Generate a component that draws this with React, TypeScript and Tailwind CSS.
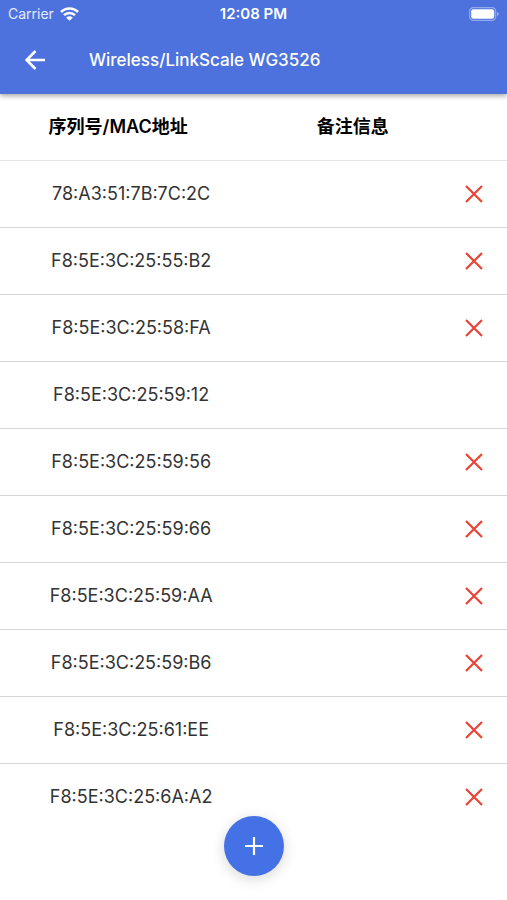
import { useState } from "react"

// ── Data ───────────────────────────────────────────────────────────────────────

type Device = {
  mac: string
  note: string
  removable: boolean
}

const DEVICES: Device[] = [
  { mac: "78:A3:51:7B:7C:2C", note: "", removable: true },
  { mac: "F8:5E:3C:25:55:B2", note: "", removable: true },
  { mac: "F8:5E:3C:25:58:FA", note: "", removable: true },
  { mac: "F8:5E:3C:25:59:12", note: "", removable: false },
  { mac: "F8:5E:3C:25:59:56", note: "", removable: true },
  { mac: "F8:5E:3C:25:59:66", note: "", removable: true },
  { mac: "F8:5E:3C:25:59:AA", note: "", removable: true },
  { mac: "F8:5E:3C:25:59:B6", note: "", removable: true },
  { mac: "F8:5E:3C:25:61:EE", note: "", removable: true },
  { mac: "F8:5E:3C:25:6A:A2", note: "", removable: true },
]

// ── Icons ──────────────────────────────────────────────────────────────────────

function WifiIcon() {
  return (
    <svg width="19" height="14" viewBox="0 0 19 14" fill="none" stroke="currentColor" strokeWidth="2.6" aria-hidden="true">
      <path d="M1 5a12 12 0 0 1 17 0" />
      <path d="M4 8.200a7.800 7.800 0 0 1 11 0" />
      <path d="M9.500 13.800 6.200 10.700a4.600 4.600 0 0 1 6.600 0z" fill="currentColor" stroke="none" />
    </svg>
  )
}

function BatteryIcon() {
  return (
    <svg width="30" height="14" viewBox="0 0 30 14" aria-hidden="true">
      <rect x="0.7" y="0.7" width="26" height="12.6" rx="3.6" fill="none" stroke="#fff" strokeOpacity="0.4" strokeWidth="1.2" />
      <rect x="2.2" y="2.2" width="23" height="9.6" rx="2.2" fill="#fff" />
      <path d="M28.2 5v4c.9-.4 1.5-1.1 1.5-2s-.6-1.600-1.500-2z" fill="#fff" fillOpacity="0.5" />
    </svg>
  )
}

function BackIcon() {
  return (
    <svg width="20" height="20" viewBox="0 0 20 20" fill="none" stroke="currentColor" strokeWidth="2.5" aria-hidden="true">
      <path d="M20 10H2M10.500 1 1.600 10l8.900 9" />
    </svg>
  )
}

function CloseIcon() {
  return (
    <svg width="18" height="18" viewBox="0 0 18 18" fill="none" stroke="currentColor" strokeWidth="2.2" aria-hidden="true">
      <path d="M1 1l16 16M17 1 1 17" />
    </svg>
  )
}

function PlusIcon() {
  return (
    <svg width="18" height="18" viewBox="0 0 18 18" fill="none" stroke="currentColor" strokeWidth="2.2" aria-hidden="true">
      <path d="M9 0v18M0 9h18" />
    </svg>
  )
}

// ── Sections ───────────────────────────────────────────────────────────────────

function StatusBar() {
  return (
    <div className="grid grid-cols-3 items-center h-7 px-2 text-sm">
      <div className="flex items-center gap-[6px]">
        <span className="text-white/85">Carrier</span>
        <WifiIcon />
      </div>
      <span className="text-center text-[15px] font-semibold">12:08 PM</span>
      <div className="flex justify-end">
        <BatteryIcon />
      </div>
    </div>
  )
}

function AppBar({ title }: { title: string }) {
  return (
    <header className="relative bg-[#4d72de] text-white shadow-[0_2px_5px_rgba(0,0,0,0.35)]">
      <StatusBar />
      <div className="flex items-center h-[66px] pb-0.5 pl-[25px]">
        <button type="button" aria-label="返回" className="flex items-center w-16 h-10">
          <BackIcon />
        </button>
        <h1 className="text-[17px] leading-6 font-medium">{title}</h1>
      </div>
    </header>
  )
}

function DeviceTable({ devices, onRemove }: { devices: Device[]; onRemove: (mac: string) => void }) {
  return (
    <table className="w-full table-fixed border-collapse">
      <colgroup>
        <col className="w-[47%]" />
        <col />
        <col className="w-[66px]" />
      </colgroup>
      <thead>
        <tr className="h-[66px] border-b border-[#e4e4e4] text-lg text-black">
          <th scope="col" className="p-0 pr-0.5 font-semibold">序列号/MAC地址</th>
          <th scope="col" colSpan={2} className="p-0 pr-10 font-semibold">备注信息</th>
        </tr>
      </thead>
      <tbody>
        {devices.map(d => (
          <tr key={d.mac} className="h-[67px] border-b border-[#d6d6d6] last:border-b-0 text-lg text-[#333]">
            <td className="p-0 pl-6 text-center whitespace-nowrap">{d.mac}</td>
            <td className="p-0 text-center">{d.note}</td>
            <td className="p-0">
              {d.removable && (
                <button
                  type="button"
                  aria-label={`删除 ${d.mac}`}
                  onClick={() => onRemove(d.mac)}
                  className="flex items-center justify-center w-full h-10 text-[#ea4335]"
                >
                  <CloseIcon />
                </button>
              )}
            </td>
          </tr>
        ))}
      </tbody>
    </table>
  )
}

// ── Page ───────────────────────────────────────────────────────────────────────

export default function App() {
  const [devices, setDevices] = useState(DEVICES)

  const remove = (mac: string) => setDevices(list => list.filter(d => d.mac !== mac))

  return (
    <div className="min-h-screen bg-white font-[Inter,'Noto_Sans_CJK_SC',sans-serif]">
      <AppBar title="Wireless/LinkScale WG3526" />
      <main>
        <DeviceTable devices={devices} onRemove={remove} />
      </main>

      {/* Floating add button */}
      <div className="fixed inset-x-0 bottom-6 flex justify-center pointer-events-none">
        <button
          type="button"
          aria-label="添加"
          className="flex items-center justify-center size-[60px] rounded-full bg-[#4571e6] text-white shadow-[0_3px_14px_rgba(0,0,0,0.16)] pointer-events-auto"
        >
          <PlusIcon />
        </button>
      </div>
    </div>
  )
}
